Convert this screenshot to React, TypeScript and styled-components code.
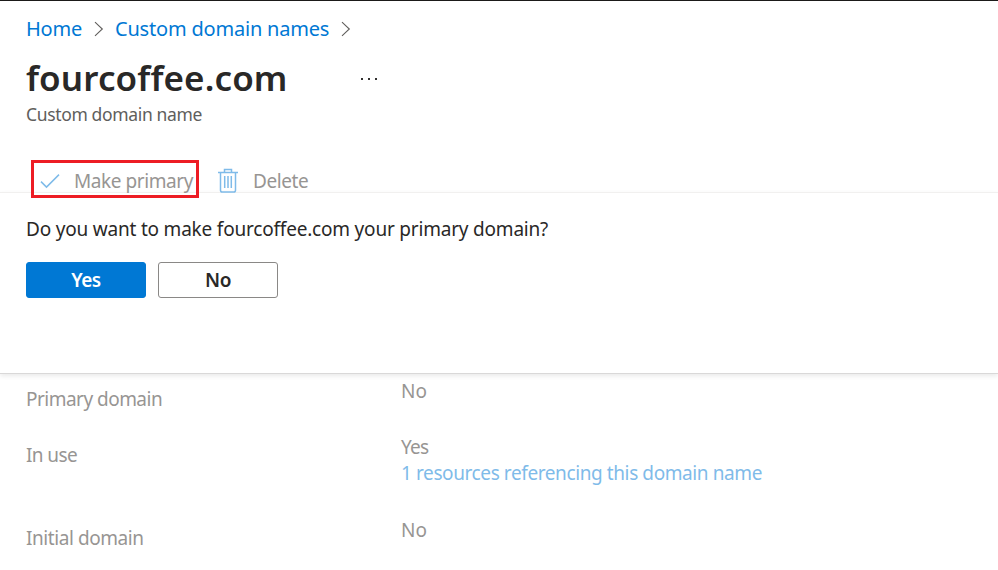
import React from "react";
import styled, { createGlobalStyle } from "styled-components";

const GlobalStyle = createGlobalStyle`
  * { box-sizing: border-box; }
  body { margin: 0; background: #fff; overflow: hidden; }
`;

const Page = styled.main`
  width: 998px;
  height: 570px;
  overflow: hidden;
  display: flex;
  flex-direction: column;
  border-top: 1px solid #1b1a19;
  background: #fff;
  color: #292827;
  font-family: "Noto Sans", "Open Sans", sans-serif;
  font-size: 19px;
  font-weight: 400;
  line-height: 26px;
  white-space: nowrap;
`;

const Text = styled.span<{ $track?: number }>`
  letter-spacing: ${(p) => p.$track ?? 0}px;
`;

const Breadcrumb = styled.nav`
  display: flex;
  align-items: center;
  height: 26px;
  margin: 15px 0 0 26px;
  font-size: 20px;
`;

const Crumb = styled.a<{ $width: number; $track: number }>`
  width: ${(p) => p.$width}px;
  color: #0078d4;
  letter-spacing: ${(p) => p.$track}px;
  text-decoration: none;
`;

const Chevron = styled.svg`
  width: 10px;
  height: 16px;
  margin: 0 11px 0 12px;
  fill: none;
  stroke: #605e5c;
  stroke-width: 1.1;
`;

const TitleRow = styled.header`
  display: flex;
  height: 48px;
  margin: 12px 0 0 26px;
`;

const Title = styled.h1`
  width: 334px;
  margin: 0;
  font-size: 35px;
  font-weight: 600;
  line-height: 48px;
  letter-spacing: 0.12px;
  font-variant-ligatures: none;
`;

const More = styled.svg`
  width: 18px;
  height: 4px;
  margin-top: 23px;
  fill: #323130;
`;

const Subtitle = styled.p`
  height: 24px;
  margin: 0 0 0 26px;
  font-size: 17.5px;
  line-height: 24px;
  color: #605e5c;
`;

const CommandBar = styled.div`
  display: flex;
  align-items: center;
  height: 66px;
  padding: 43px 0 0 26px;
  color: #979593;
`;

const Command = styled.button<{ $width: number; $gap: number }>`
  position: relative;
  display: flex;
  align-items: center;
  width: ${(p) => p.$width}px;
  height: 26px;
  gap: ${(p) => p.$gap}px;
  padding: 0;
  border: 0;
  background: none;
  color: inherit;
  font: inherit;
  white-space: nowrap;
`;

const Highlight = styled.i`
  position: absolute;
  left: 5px;
  top: -8px;
  width: 168px;
  height: 38px;
  border: 3px solid #ed1c24;
`;

const CheckIcon = styled.svg`
  flex: none;
  width: 20px;
  height: 16px;
  margin-left: 14px;
  fill: none;
  stroke: #7fbbe9;
  stroke-width: 1.5;
`;

const TrashIcon = styled.svg`
  flex: none;
  width: 20px;
  height: 25px;
  fill: none;
  stroke: #7fbbe9;
  stroke-width: 1.5;
`;

const Dialog = styled.section`
  height: 182px;
  flex: none;
  padding: 23px 26px 0;
  border-top: 1px solid #f1f0ef;
  border-bottom: 1px solid #d9d8d8;
  background: #fff;
  box-shadow: 0 2px 5px rgba(0, 0, 0, 0.09);
`;

const Question = styled.p`
  margin: 0 0 20px;
  font-variant-ligatures: none;
`;

const Actions = styled.div`
  display: flex;
  gap: 12px;
`;

const Action = styled.button<{ $primary?: boolean }>`
  width: 120px;
  height: 36px;
  padding: 0;
  border: 1px solid ${(p) => (p.$primary ? "#0078d4" : "#8a8886")};
  border-radius: 3px;
  background: ${(p) => (p.$primary ? "#0078d4" : "#fff")};
  color: ${(p) => (p.$primary ? "#fff" : "#292827")};
  font: inherit;
  font-size: 19px;
  font-weight: 600;
  letter-spacing: -0.5px;
`;

const Properties = styled.dl`
  margin: 0;
  padding: 4px 0 0 26px;
  color: #979593;
`;

const Property = styled.div<{ $height: number }>`
  display: grid;
  grid-template-columns: 375px 1fr;
  align-items: start;
  height: ${(p) => p.$height}px;
`;

const Label = styled.dt`
  padding-top: 8px;
`;

const Value = styled.dd`
  display: flex;
  flex-direction: column;
  margin: 0;
`;

const ResourceLink = styled.a`
  color: #7fbbe9;
`;

const Separator = () => (
  <Chevron viewBox="0 0 10 16">
    <path d="M1 1.2 8.3 8 1 14.8" />
  </Chevron>
);

export default function App() {
  return (
    <Page>
      <GlobalStyle />
      <Breadcrumb>
        <Crumb $width={56} $track={-0.2}>Home</Crumb>
        <Separator />
        <Crumb $width={214} $track={-0.2}>Custom domain names</Crumb>
        <Separator />
      </Breadcrumb>
      <TitleRow>
        <Title>fourcoffee.com</Title>
        <More viewBox="0 0 18 4">
          <rect x="1" y="1" width="2" height="2" />
          <rect x="8" y="1" width="2" height="2" />
          <rect x="15" y="1" width="2" height="2" />
        </More>
      </TitleRow>
      <Subtitle>
        <Text $track={-0.35}>Custom domain name</Text>
      </Subtitle>
      <CommandBar>
        <Command $width={192} $gap={14}>
          <CheckIcon viewBox="0 0 20 16">
            <path d="m1 8.6 5.5 5.5L19 1.6" />
          </CheckIcon>
          <Text $track={-0.42}>Make primary</Text>
          <Highlight />
        </Command>
        <Command $width={100} $gap={15}>
          <TrashIcon viewBox="0 0 20 25">
            <path d="M0 4.5h20M6.5 4V1.5h7V4M2.5 5v17.2q0 1.8 1.8 1.8h11.4q1.8 0 1.8-1.8V5M6.7 8v12M10 8v12M13.3 8v12" />
          </TrashIcon>
          <Text $track={-0.4}>Delete</Text>
        </Command>
      </CommandBar>
      <Dialog>
        <Question>
          <Text $track={-0.2}>Do you want to make fourcoffee.com your primary domain?</Text>
        </Question>
        <Actions>
          <Action $primary>Yes</Action>
          <Action>No</Action>
        </Actions>
      </Dialog>
      <Properties>
        <Property $height={56}>
          <Label><Text $track={-0.52}>Primary domain</Text></Label>
          <Value>No</Value>
        </Property>
        <Property $height={83}>
          <Label><Text $track={-0.6}>In use</Text></Label>
          <Value>
            <Text $track={-0.7}>Yes</Text>
            <ResourceLink><Text $track={-0.4}>1 resources referencing this domain name</Text></ResourceLink>
          </Value>
        </Property>
        <Property $height={40}>
          <Label><Text $track={-0.43}>Initial domain</Text></Label>
          <Value>No</Value>
        </Property>
      </Properties>
    </Page>
  );
}
